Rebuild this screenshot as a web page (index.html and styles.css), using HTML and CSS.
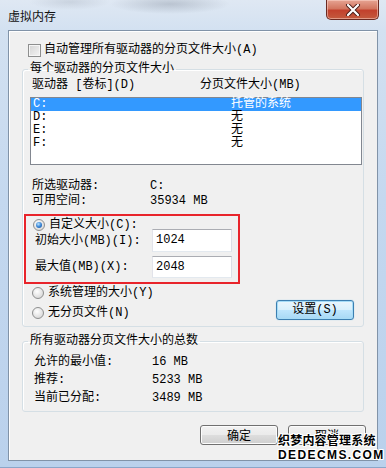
FILE: index.html
```html
<!DOCTYPE html>
<html lang="zh-CN">
<head>
<meta charset="utf-8">
<title>虚拟内存</title>
<link rel="stylesheet" href="styles.css">
</head>
<body>
<div class="window">
  <div class="titlebar">
    <span class="title">虚拟内存</span>
    <div class="close">
      <svg width="20" height="12" viewBox="0 0 20 12">
        <path d="M5 1 L15 11 M15 1 L5 11" stroke="#4a1d18" stroke-width="4" stroke-linecap="round"/>
        <path d="M5 1 L15 11 M15 1 L5 11" stroke="#ffffff" stroke-width="2.2" stroke-linecap="round"/>
      </svg>
    </div>
  </div>
  <div class="panel">
    <div class="check-row"><span class="checkbox"></span><span>自动管理所有驱动器的分页文件大小(A)</span></div>

    <fieldset class="group g1">
      <legend>每个驱动器的分页文件大小</legend>
      <div class="cols"><span>驱动器 [卷标](D)</span><span>分页文件大小(MB)</span></div>
      <div class="listbox">
        <div class="li sel"><span>C:</span><span>托管的系统</span></div>
        <div class="li"><span>D:</span><span>无</span></div>
        <div class="li"><span>E:</span><span>无</span></div>
        <div class="li"><span>F:</span><span>无</span></div>
      </div>
      <div class="info">
        <span>所选驱动器:</span><span>C:</span>
        <span>可用空间:</span><span>35934 MB</span>
      </div>
      <div class="redbox">
        <div class="radio-row r1"><span class="radio on"></span><span>自定义大小(C):</span></div>
        <div class="field-row fr1"><span class="flabel">初始大小(MB)(I):</span><div class="input">1024</div></div>
        <div class="field-row fr2"><span class="flabel">最大值(MB)(X):</span><div class="input">2048</div></div>
      </div>
      <div class="bottom">
        <div class="radios">
          <div class="radio-row"><span class="radio"></span><span>系统管理的大小(Y)</span></div>
          <div class="radio-row"><span class="radio"></span><span>无分页文件(N)</span></div>
        </div>
        <div class="btn focus">设置(S)</div>
      </div>
    </fieldset>

    <fieldset class="group g2">
      <legend>所有驱动器分页文件大小的总数</legend>
      <div class="totals">
        <span>允许的最小值:</span><span>16 MB</span>
        <span>推荐:</span><span>5233 MB</span>
        <span>当前已分配:</span><span>3489 MB</span>
      </div>
    </fieldset>

    <div class="buttons">
      <div class="btn">确定</div>
      <div class="btn">取消</div>
    </div>
  </div>
  <div class="watermark">
    <div class="wm1">织梦内容管理系统</div>
    <div class="wm2">DEDECMS.COM</div>
  </div>
</div>
</body>
</html>
```
FILE: styles.css
```css
* { box-sizing: border-box; }
html, body { margin: 0; padding: 0; }
body {
  width: 386px;
  height: 468px;
  overflow: hidden;
  font-family: "Liberation Mono", "Noto Sans CJK SC", monospace;
  font-size: 12px;
  line-height: 14px;
  color: #000;
  background: #fff;
}
.window {
  position: relative;
  width: 386px;
  height: 468px;
  display: flex;
  flex-direction: column;
  background:
    radial-gradient(ellipse 60px 10px at 170px 4px, rgba(120,130,145,0.35), rgba(120,130,145,0) 100%),
    radial-gradient(ellipse 40px 8px at 70px 2px, rgba(140,150,165,0.25), rgba(140,150,165,0) 100%),
    linear-gradient(180deg, #dfe8f3 0, #d3e1f1 30px, #c4d8ef 200px, #bad1ec 100%);
  border-bottom: 1px solid #8aa6c9;
}
.titlebar {
  height: 30px;
  display: flex;
  align-items: flex-start;
}
.title {
  font-family: "Noto Sans CJK SC", sans-serif;
  font-size: 12px;
  line-height: 14px;
  padding: 9px 0 0 8px;
  color: #111;
}
.close {
  margin-left: auto;
  margin-right: 7px;
  width: 53px;
  height: 20px;
  border: 1px solid #6b2a22;
  border-top: none;
  border-radius: 0 0 5px 5px;
  background: linear-gradient(180deg, #e6a493 0, #d37660 45%, #c2412d 55%, #c35a3e 100%);
  box-shadow: inset 0 0 0 1px rgba(255,220,210,0.5);
  display: flex;
  align-items: center;
  justify-content: center;
}
.panel {
  margin: 0 8px;
  height: 431px;
  border: 1px solid #8193a8;
  box-shadow: inset 1px 1px 0 #ffffff;
  background: #f0f0f0;
  padding: 12px 13px 13px;
  display: flex;
  flex-direction: column;
}
.check-row {
  height: 14px;
  display: flex;
  align-items: center;
  padding-left: 6px;
  gap: 3px;
}
.checkbox {
  width: 13px;
  height: 13px;
  border: 1px solid #8e8f8f;
  background: linear-gradient(135deg, #d4d4d4 0, #f4f4f4 100%);
  box-shadow: inset 0 0 0 1px #f6f6f6;
  flex: none;
}
.group {
  margin: 0;
  padding: 0;
  border: 1px solid #d5dfe5;
  border-radius: 3px;
  box-shadow: inset 1px 1px 0 #fff;
  min-width: 0;
}
.group legend {
  padding: 0 2px;
  margin-left: 5px;
  line-height: 14px;
  font-size: 12px;
}
.g1 { margin-top: 5px; padding-bottom: 6px; }
.cols {
  margin-top: 2px;
  height: 14px;
  padding-left: 9px;
  display: grid;
  grid-template-columns: 168px auto;
}
.listbox {
  margin: 5px 1px 0 7px;
  height: 68px;
  border: 1px solid #828790;
  background: #fff;
}
.li {
  height: 13px;
  line-height: 13px;
  display: grid;
  grid-template-columns: 198px auto;
  padding-left: 2px;
}
.li.sel {
  background: #3399ff;
  color: #fff;
}
.info {
  margin-top: 14px;
  padding-left: 9px;
  display: grid;
  grid-template-columns: 118px auto;
  grid-auto-rows: 15px;
}
.redbox {
  margin: 5px 0 0 1px;
  width: 216px;
  border: 2px solid #e8242b;
  padding: 2px 0 4px 0;
}
.radio-row {
  height: 14px;
  display: flex;
  align-items: center;
  gap: 4px;
  padding-left: 9px;
}
.redbox .r1 { height: 13px; padding-left: 7px; }
.radio {
  width: 12px;
  height: 12px;
  border-radius: 50%;
  border: 1px solid #8e8f8f;
  background: radial-gradient(circle at 40% 35%, #ffffff 0, #e4e4e4 55%, #cfcfcf 100%);
  flex: none;
  position: relative;
}
.radio.on::after {
  content: "";
  position: absolute;
  left: 2px; top: 2px;
  width: 6px; height: 6px;
  border-radius: 50%;
  background: radial-gradient(circle at 40% 35%, #b9e3ff 0, #3b86d6 50%, #134b92 100%);
}
.field-row {
  display: flex;
  align-items: center;
  padding-left: 9px;
}
.fr1 { margin-top: -2px; height: 23px; }
.fr2 { margin-top: 4px; height: 22px; }
.flabel { width: 117px; }
.input {
  width: 80px;
  height: 100%;
  border: 1px solid #abadb3;
  border-left-color: #e2e3ea;
  border-right-color: #dbdfe6;
  border-bottom-color: #e3e9ef;
  background: #fff;
  padding: 3px 0 0 3px;
  line-height: 14px;
}
.bottom {
  margin-top: 2px;
  display: flex;
  align-items: flex-end;
  justify-content: space-between;
  padding-right: 9px;
}
.radios {
  display: flex;
  flex-direction: column;
  gap: 6px;
}
.btn {
  width: 78px;
  height: 20px;
  border: 1px solid #707070;
  border-radius: 3px;
  background: linear-gradient(180deg, #f2f2f2 0, #ebebeb 48%, #dddddd 52%, #cfcfcf 100%);
  box-shadow: inset 0 0 0 1px #fcfcfc;
  display: flex;
  align-items: center;
  justify-content: center;
  line-height: 14px;
  font-family: "Noto Sans CJK SC", "Liberation Mono", sans-serif;
}
.btn.focus {
  border-color: #3c7fb1;
  box-shadow: inset 0 0 0 1px #a6dcf7, 0 0 1px #7ec2e8;
  background: linear-gradient(180deg, #eaf6fd 0, #d9f0fc 48%, #bee6fd 52%, #a7d9f5 100%);
  font-family: "Liberation Mono", "Noto Sans CJK SC", monospace;
}
.g2 { margin-top: 7px; padding-bottom: 4px; }
.totals {
  margin-top: 5px;
  padding-left: 11px;
  display: grid;
  grid-template-columns: 118px auto;
  grid-auto-rows: 18px;
  align-items: center;
}
.buttons {
  margin-top: 13px;
  display: flex;
  justify-content: flex-end;
  gap: 10px;
  padding-right: -2px;
  margin-right: -2px;
}
.watermark {
  position: absolute;
  left: 278px;
  top: 432px;
  font-weight: bold;
  color: #000;
  text-shadow: 1px 0 #fff, -1px 0 #fff, 0 1px #fff, 0 -1px #fff, 1px 1px #fff, -1px -1px #fff, 1px -1px #fff, -1px 1px #fff;
}
.wm1 {
  font-family: "Noto Sans CJK SC", sans-serif;
  font-size: 12px;
  line-height: 16px;
  letter-spacing: 0.2px;
}
.wm2 {
  font-family: "Liberation Sans", sans-serif;
  font-size: 12px;
  line-height: 14px;
  letter-spacing: 1.4px;
}
```
